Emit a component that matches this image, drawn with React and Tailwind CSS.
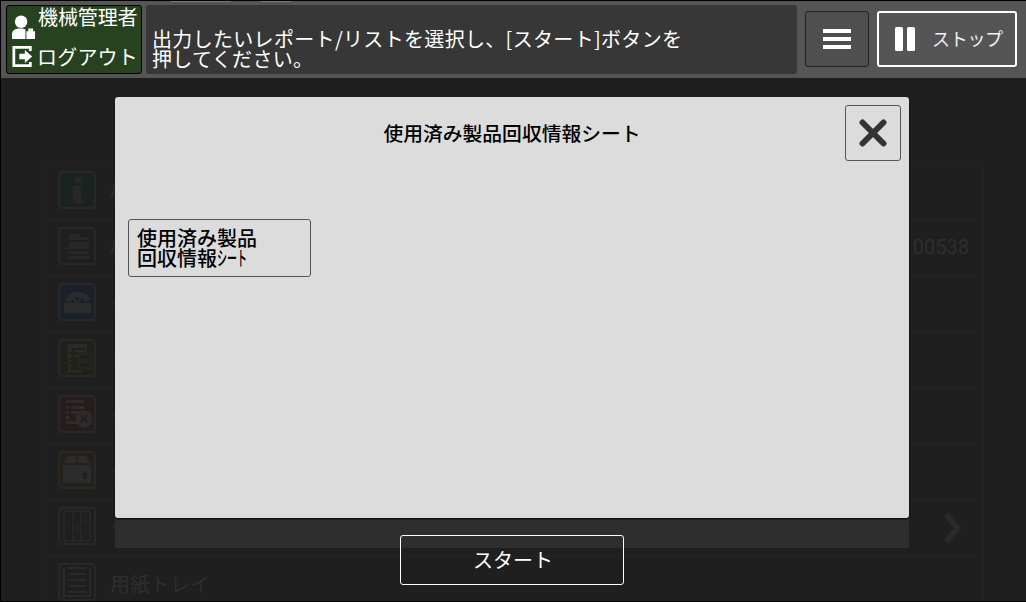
const ff = "font-['Noto_Sans_CJK_JP','Noto_Sans',sans-serif]";

function Info() {
  return (
    <svg viewBox="0 0 34 34" className="w-full h-full" fill="#282828">
      <circle cx="18" cy="7" r="3.500" />
      <path d="M11 13h10v11c0 2 1 3 3 3v3c-6 1-11 0-11-5v-9c0-1-1-2-2-2z" />
    </svg>
  );
}
function Stack() {
  return (
    <svg viewBox="0 0 34 34" className="w-full h-full" fill="#282828">
      <path d="M9 5h10l2 3h8v3H9zM9 13h20v7H5v-1h4zM9 22h20v3H9zM9 27h20v3H9z" />
    </svg>
  );
}
function Disc() {
  return (
    <svg viewBox="0 0 34 34" className="w-full h-full" fill="none" stroke="#2c2c2c">
      <path d="M8 16a11 11 0 0 1 20 0" strokeWidth="5" />
      <circle cx="17" cy="14" r="3" strokeWidth="1.500" />
      <rect x="4" y="18" width="27" height="10" fill="#2c2c2c" stroke="none" />
    </svg>
  );
}
function Sheet() {
  return (
    <svg viewBox="0 0 34 34" className="w-full h-full" fill="#2a2a2a">
      <path d="M8 3h19v4H8zM8 9h4v2H8zM14 9h13v2H14zM8 14h4v2H8zM14 14h5v2h-5zM8 19h4v2H8zM8 24h4v2H8zM8 29h14v2H8z" />
      <path d="M8 3h2v28H8zM25 3h2v9h-2z" />
      <rect x="19" y="13" width="12" height="6" fill="none" stroke="#2a2a2a" />
      <rect x="19" y="21" width="12" height="6" fill="none" stroke="#2a2a2a" />
    </svg>
  );
}
function Cancel() {
  return (
    <svg viewBox="0 0 34 34" className="w-full h-full" fill="#2c2c2c">
      <path d="M6 3h18v3H6zM6 9h3v3H6zM11 9h13v3H11zM6 14h3v3H6zM11 14h9v3h-9zM6 19h3v3H6zM6 24h12v3H6z" />
      <circle cx="24" cy="22" r="8.500" />
      <path d="M20.500 18.500l7 7M27.500 18.500l-7 7" stroke="#281c1c" strokeWidth="2" />
    </svg>
  );
}
function Box() {
  return (
    <svg viewBox="0 0 34 34" className="w-full h-full" fill="#2c2c2c">
      <path d="M8 3h8v7H3zM18 3h8l5 7H18zM3 12h28v18H3z" />
      <path d="M25 17l4 5h-2v4h-4v-4h-2z" fill="#232120" />
    </svg>
  );
}
function Trays() {
  return (
    <svg viewBox="0 0 34 34" className="w-full h-full" fill="none" stroke="#2a2a2a" strokeWidth="1.500">
      <rect x="4" y="2" width="26" height="30" rx="2" />
      <path d="M13 2v30M21 2v30" />
      <g fill="#2a2a2a" stroke="none" fontSize="9" fontFamily="Roboto, sans-serif" textAnchor="middle">
        <text x="8.500" y="22">1</text>
        <text x="17" y="22">2</text>
        <text x="25.500" y="13">5</text>
        <text x="25.500" y="26">4</text>
      </g>
    </svg>
  );
}
function Paper() {
  return (
    <svg viewBox="0 0 34 34" className="w-full h-full" fill="none" stroke="#2a2a2a" strokeWidth="2">
      <path d="M4 3v28h26V3" />
      <path d="M8 3h18M8 9h18M8 15h18M8 21h18M8 27h18" />
    </svg>
  );
}

const rows = [
  { box: "bg-[#1a2321]", icon: <Info />, text: "機械情報" },
  { box: "bg-[#1f1f1f]", icon: <Stack />, text: "機械番号", right: "00538" },
  { box: "bg-[#1b212b]", icon: <Disc />, text: "ジョブ" },
  { box: "bg-[#1f2219]", icon: <Sheet />, text: "レポート" },
  { box: "bg-[#271c1c]", icon: <Cancel />, text: "ジョブ" },
  { box: "bg-[#252118]", icon: <Box />, text: "ジョブ" },
  { box: "bg-[#1f1f1f]", icon: <Trays />, text: "ジョブ", chevron: true },
  { box: "bg-[#1f1f1f]", icon: <Paper />, text: "用紙トレイ" },
];

export default function App() {
  return (
    <div className={`relative w-[1026px] h-[602px] overflow-hidden flex flex-col bg-[#1f1f1f] border-l border-t border-b border-black ${ff}`}>
      <div className="absolute left-[170px] top-0 w-[60px] h-[1px] bg-[#777]" />
      <div className="absolute left-[260px] top-0 w-[30px] h-[1px] bg-[#777]" />
      <header className="h-[77px] shrink-0 bg-[#555555] flex items-start pt-[4px] pl-[5px] pr-[8px]">
        <div className="w-[136px] h-[69px] rounded-[3px] bg-[#27421f] border border-black text-white flex flex-col text-[20px] leading-[23px]">
          <div className="flex h-[35px]">
            <svg viewBox="0 0 24 26" className="w-[23px] h-[25px] ml-[5px] mt-[9px]" fill="#fff">
              <circle cx="9.500" cy="7" r="6.500" />
              <path d="M0 25v-5c0-4 3-6 9-6 2 0 4 .3 5 1v10H0z" />
              <path d="M15 17h2v-3h5v3h2v8h-9z" />
            </svg>
            <span className="ml-[3px] -mt-[1px] tracking-[-0.1px] whitespace-nowrap">機械管理者</span>
          </div>
          <div className="flex items-center h-[33px]">
            <svg viewBox="0 0 24 24" className="w-[22px] h-[23px] ml-[5px]" fill="none" stroke="#fff" strokeWidth="3">
              <path d="M20 6V2H2v20h18v-4" />
              <path d="M8 9h6V5l8 7-8 7v-4H8z" fill="#fff" stroke="none" />
            </svg>
            <span className="ml-[3px] tracking-[0.2px] whitespace-nowrap">ログアウト</span>
          </div>
        </div>
        <div className="ml-[4px] w-[651px] h-[69px] rounded-[3px] bg-[#373737] text-white text-[20px] leading-[20px] pl-[6px] pt-[24px] tracking-[0.32px]">
          出力したいレポート/リストを選択し、[スタート]ボタンを<br />押してください。
        </div>
        <button className="ml-[8px] mt-[6px] w-[64px] h-[56px] rounded-[3px] bg-[#4f4f4f] border border-[#222] flex items-center justify-center">
          <svg width="28" height="20" viewBox="0 0 28 20" fill="#fff">
            <rect width="28" height="4" />
            <rect y="8" width="28" height="4" />
            <rect y="16" width="28" height="4" />
          </svg>
        </button>
        <button className="ml-[8px] mt-[6px] w-[140px] h-[56px] rounded-[3px] border-2 border-white bg-[#555] flex items-center text-white text-[18px]">
          <svg width="20" height="24" viewBox="0 0 20 24" fill="#fff" className="ml-[16px]">
            <rect width="8" height="24" rx="1.500" />
            <rect x="12" width="8" height="24" rx="1.500" />
          </svg>
          <span className="ml-[17px] -mt-[2px] tracking-[-0.3px] text-[#f0f0f0] whitespace-nowrap">ストップ</span>
        </button>
      </header>

      <main className="ml-[41px] mr-[42px] mt-[86px] flex-1 min-h-0 border-x border-t border-[#232323]">
        {rows.map((r, i) => (
          <div key={i} className="h-[56px] flex items-center border-b border-[#242424] pl-[15px] pr-[14px] text-[#2e2e2e] text-[20px]">
            <div className={`w-[38px] h-[38px] mb-[6px] rounded-[4px] border-2 border-[#282828] shrink-0 ${r.box}`}>{r.icon}</div>
            <span className="ml-[14px] mb-[2px]">{r.text}</span>
            {r.right && <span className="ml-auto mb-[4px] font-['Roboto',sans-serif]">{r.right}</span>}
            {r.chevron && (
              <svg width="22" height="32" viewBox="0 0 22 32" fill="none" stroke="#2a2a2a" strokeWidth="6" className="ml-auto mr-[5px] mb-[2px]">
                <path d="M4 3l12 13L4 29" />
              </svg>
            )}
          </div>
        ))}
      </main>

      <div className="absolute left-[114px] top-[510px] w-[794px] h-[37px] rounded-b-[3px] bg-[#2e2e2e]" />

      <section className="absolute left-[114px] top-[96px] w-[794px] h-[421px] rounded-[3px] bg-[#dcdcdc] shadow-[0_1px_2px_#000] flex flex-col text-black">
        <div className="relative h-[72px] shrink-0 flex justify-center pt-[23px] text-[19.800px] leading-[26px] font-medium">
          使用済み製品回収情報シート
          <button className="absolute right-[8px] top-[8px] w-[56px] h-[56px] rounded-[3px] border border-[#555] bg-[#dcdcdc] flex items-center justify-center">
            <svg width="28" height="28" viewBox="0 0 28 28" stroke="#333" strokeWidth="6" strokeLinecap="round">
              <path d="M3.500 3.500l21 21M24.500 3.500l-21 21" />
            </svg>
          </button>
        </div>
        <button className="ml-[13px] mt-[50px] w-[183px] h-[58px] rounded-[3px] border border-[#555] text-left pl-[8px] pb-[1px] text-[20px] leading-[20px] font-medium">
          使用済み製品<br />回収情報<span className="inline-block origin-left scale-x-50 w-[24px] whitespace-nowrap">シート</span>
        </button>
      </section>

      <button className="absolute left-[399px] top-[534px] w-[224px] h-[50px] rounded-[3px] border border-white text-white text-[20px] pl-[2px] pb-[1px]">
        スタート
      </button>
    </div>
  );
}
